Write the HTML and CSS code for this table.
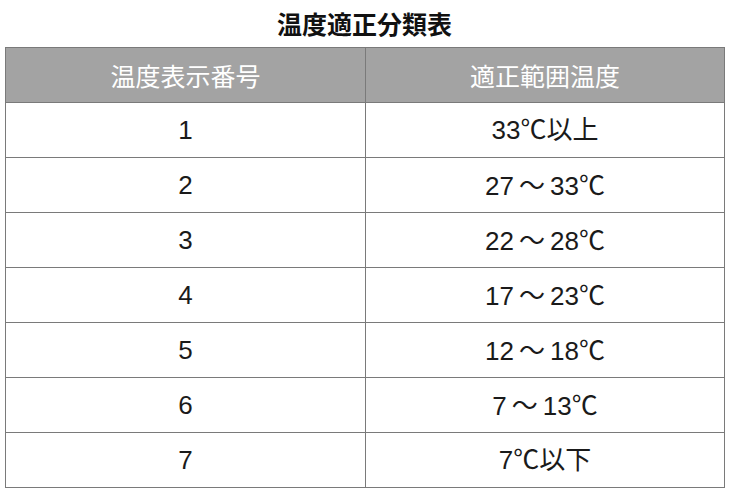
FILE: index.html
```html
<!DOCTYPE html>
<html lang="ja">
<head>
<meta charset="utf-8">
<link rel="stylesheet" href="styles.css">
</head>
<body>
<div class="page">
  <h1 class="title">温度適正分類表</h1>
  <table class="tbl">
    <thead>
      <tr><th>温度表示番号</th><th>適正範囲温度</th></tr>
    </thead>
    <tbody>
      <tr><td>1</td><td>33℃以上</td></tr>
      <tr><td>2</td><td>27<span class="tilde">～</span>33℃</td></tr>
      <tr><td>3</td><td>22<span class="tilde">～</span>28℃</td></tr>
      <tr><td>4</td><td>17<span class="tilde">～</span>23℃</td></tr>
      <tr><td>5</td><td>12<span class="tilde">～</span>18℃</td></tr>
      <tr><td>6</td><td>7<span class="tilde">～</span>13℃</td></tr>
      <tr><td>7</td><td>7℃以下</td></tr>
    </tbody>
  </table>
</div>
</body>
</html>
```
FILE: styles.css
```css
html, body {
  margin: 0;
  padding: 0;
  background: #fff;
}
body {
  font-family: "Noto Sans CJK JP", "Noto Sans", sans-serif;
  color: #1a1a1a;
}
.page {
  padding: 0 6px 0 5px;
}
.title {
  margin: 0;
  height: 47px;
  line-height: 47px;
  text-align: center;
  font-size: 25px;
  font-weight: 700;
  color: #111;
}
.tbl {
  width: 720px;
  border-collapse: collapse;
  table-layout: fixed;
}
.tbl th, .tbl td {
  border: 1px solid #7a7a7a;
  height: 54px;
  padding: 0;
  text-align: center;
  vertical-align: middle;
  line-height: 1;
}
.tbl th {
  background: #a3a3a3;
  color: #fff;
  font-weight: 400;
  font-size: 25px;
}
.tbl td {
  font-family: "Liberation Sans", "Noto Sans CJK JP", sans-serif;
  font-size: 26px;
  font-weight: 400;
  color: #1a1a1a;
}
.tilde {
  font-family: "Noto Sans CJK JP", sans-serif;
  margin: 0 5px;
}
.tbl th:first-child, .tbl td:first-child {
  width: 359px;
}
```
